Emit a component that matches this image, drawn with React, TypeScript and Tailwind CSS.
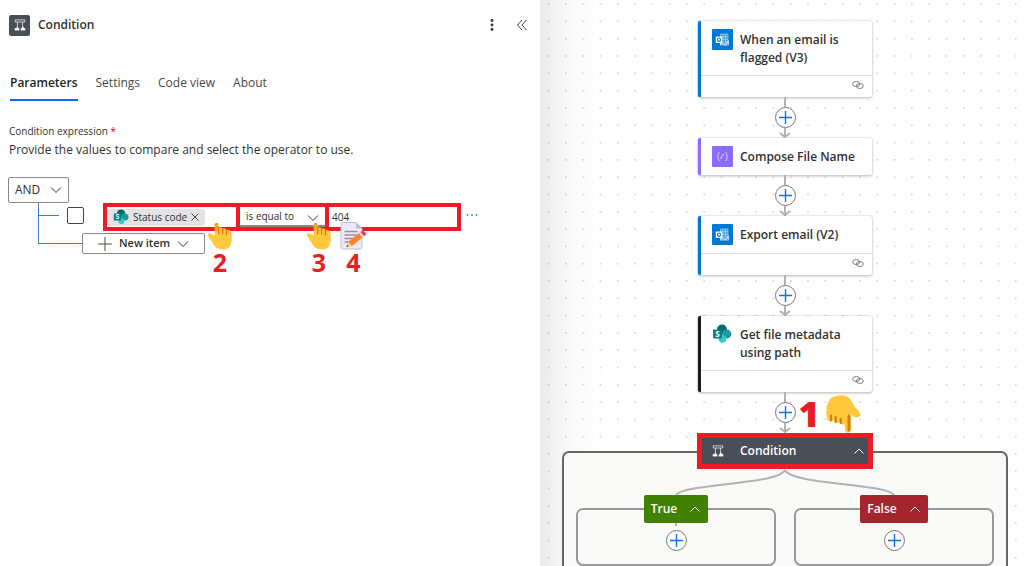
import { useState, type ReactNode } from "react";

function ConditionIcon({ className }: { className?: string }) {
  return (
    <svg viewBox="0 0 14 14" className={className} fill="none" stroke="currentColor">
      <path d="M1.500 1h11v2.500h-11zM4 3.500V9M10 3.500V9" strokeWidth="0.8" />
      <path d="M1 13h5v-2H5.200L4 8.500 2.800 11H1zM8 13h5v-2h-.800L10 8.500 8.800 11H8z" fill="currentColor" strokeWidth="0.4" />
    </svg>
  );
}

function OutlookIcon() {
  return (
    <svg viewBox="0 0 21 21" className="size-[21px] shrink-0">
      <rect width="21" height="21" rx="1" fill="#0078d4" />
      <path d="M8.500 5h7.500v8H8.500zM11 5v8M13.500 5v8M8.500 7.700H16M8.500 10.300H16" fill="#3d98de" stroke="#c4e0f6" strokeWidth="0.6" />
      <path d="M8 12l4.500 2L17 11v5.500H8z" fill="#b5d8f3" />
      <path d="M9 16.500l3.500-2.500M17 16.500l-4.300-3" stroke="#0078d4" strokeWidth="0.5" />
      <rect x="3.800" y="7.500" width="6.400" height="6.400" rx="0.400" fill="#fff" />
      <ellipse cx="7" cy="10.700" rx="1.500" ry="1.700" fill="none" stroke="#0078d4" strokeWidth="1.100" />
    </svg>
  );
}

function ComposeIcon() {
  return (
    <svg viewBox="0 0 21 21" className="size-[21px] shrink-0">
      <rect width="21" height="21" rx="1" fill="#8c6cff" />
      <g fill="none" stroke="#e4dcff" strokeWidth="0.9">
        <path d="M7.500 6.500c-1.500 0-1.200.8-1.200 2s-.3 1.800-1.300 2c1 .2 1.300.8 1.300 2s-.3 2 1.200 2" />
        <path d="M13.500 6.500c1.500 0 1.200.8 1.200 2s.3 1.800 1.300 2c-1 .2-1.300.8-1.300 2s.3 2-1.200 2" />
        <path d="M8.500 12.200l3.300-3.800M8.500 12.200h1.300M10.500 8.600h1.500" />
      </g>
    </svg>
  );
}

function SharePointIcon({ className }: { className?: string }) {
  return (
    <svg viewBox="0 0 20 20" className={className}>
      <circle cx="10" cy="5.500" r="5" fill="#036c70" />
      <circle cx="14.800" cy="10" r="4.500" fill="#1a9ba1" />
      <circle cx="10.500" cy="15" r="3.800" fill="#37c6d0" />
      <rect x="1" y="5.500" width="9" height="9" rx="0.800" fill="#038387" />
      <text x="5.500" y="12.800" textAnchor="middle" fontSize="8" fontWeight="700" fill="#fff">S</text>
    </svg>
  );
}

function LinkIcon() {
  return (
    <svg viewBox="0 0 12 10" className="h-[10px] w-3" fill="none" stroke="#808080">
      <ellipse cx="4.200" cy="4" rx="3.500" ry="2.500" />
      <ellipse cx="7.800" cy="6" rx="3.500" ry="2.500" />
    </svg>
  );
}

function Chevron({ up = false, className }: { up?: boolean; className?: string }) {
  return (
    <svg viewBox="0 0 12 12" className={className} fill="none" stroke="currentColor">
      <path d={up ? "M1.500 8.500L6 4l4.500 4.500" : "M1 3.500l5 5 5-5"} />
    </svg>
  );
}

function PointingHand({ className }: { className?: string }) {
  return (
    <svg viewBox="0 0 26 28" className={className}>
      <path
        d="M7.600 2.500C7.800.7 11.400.4 11.700 2.600V6c1.700-1 3.500-.4 3.900.9 1.700-.8 3.300-.2 3.800 1.100 2-.7 4.600.3 4.900 2.500.9 4.500.8 8.400-.7 12.200-1 3.300-3.500 4.700-8.200 4.700-5 0-7.400-2-8.900-5.400C5.300 19.500 2.800 17.500 1.200 14c-1-2 .3-3 2.200-2.500 1.600.4 3 1.200 4.500 2.500z"
        fill="#ffc83d"
      />
      <path d="M7.600 2.500C7.800.7 10.800.4 11.200 2v4L8 9.500z" fill="#f0a52b" />
      <path d="M11.700 6v5.500M15.600 7v5M19.500 8.500V13" stroke="#d67d00" strokeWidth="1.300" strokeLinecap="round" />
    </svg>
  );
}

function PointingHandDown({ className }: { className?: string }) {
  return (
    <svg viewBox="0 0 36 38" className={className}>
      <path
        d="M2 24C.500 17 1 9 5 4c3-3.500 13-5 18-2 3 2 4.500 5.500 6 8.500 2 3 4.500 4.500 6 7.500 1.500 3-1.500 5.200-5 4-2-.6-3.300-1.500-4.500-2.500L26 34c0 4.500-5.500 5-6 1l-.5-6c-2 1-4.500.5-5.300-1.500-2.700.8-4.700 0-5.200-1.900C6 26.700 2.700 26.500 2 24z"
        fill="#ffc83d"
      />
      <path d="M24 21v14" stroke="#d67d00" strokeWidth="3" strokeLinecap="round" />
      <path d="M15.800 24v4M10.700 22v5M6 20.500v5" stroke="#d67d00" strokeWidth="2.200" strokeLinecap="round" />
    </svg>
  );
}

function NoteIcon({ className }: { className?: string }) {
  return (
    <svg viewBox="0 0 27 28" className={className}>
      <path d="M1 2c0-.8.600-1.500 1.500-1.500H16l6 6V25.500c0 .8-.6 1.500-1.500 1.500h-18C1.600 27 1 26.300 1 25.500z" fill="#eee8f4" stroke="#c5b9cf" />
      <path d="M16 .500l6 6h-6z" fill="#c5b9cf" />
      <path d="M4.500 9.500h13M4.500 13h12M4.500 16.500h9M4.500 20h5" stroke="#998ea4" strokeWidth="1.300" />
      <path d="M7 24.500l1.500-5L19 11l3.500 4.500L12 24z" fill="#ff822d" />
      <path d="M7 24.500l1.500-5 3.500 4.500z" fill="#ffce7c" />
      <path d="M6.500 25l.700-2.200 1.500 1.700z" fill="#433b6b" />
      <path d="M19 11l1.500-1.200 3.500 4.500-1.500 1.200z" fill="#d3d3d3" />
      <path d="M20.500 9.800c1.700-1.500 3.200-1 4.500.4s1.300 2.800-1 4.100z" fill="#f92f60" />
    </svg>
  );
}

function AddButton() {
  return (
    <button aria-label="Insert a new action" className="grid size-[21px] place-items-center rounded-full border border-[#777] bg-white">
      <svg viewBox="0 0 13 13" className="size-[13px]" stroke="#1270ef" strokeWidth="1.400">
        <path d="M6.500 0v13M0 6.500h13" />
      </svg>
    </button>
  );
}

function Connector() {
  return (
    <div className="flex h-[41px] flex-col items-center">
      <div className="h-[10px] w-[2px] bg-[#b1b1b7]" />
      <AddButton />
      <svg viewBox="0 0 12 10" className="h-[10px] w-3" fill="none" stroke="#b1b1b7" strokeWidth="2">
        <path d="M6 0v8.500M1 5l5 4 5-4" />
      </svg>
    </div>
  );
}

type ActionCardProps = { title: string; icon: ReactNode; accent: string; linked?: boolean };

function ActionCard({ title, icon, accent, linked = true }: ActionCardProps) {
  return (
    <article className={`w-[174px] rounded-[2px] border-l-3 bg-white shadow-[0_0_2px_#00000055,0_2px_3px_#00000022] ${accent}`}>
      <div className="flex min-h-[37px] gap-[7px] pt-[10px] pr-2 pb-2 pl-[11px]">
        <div className="-my-[2px] w-[21px] shrink-0">{icon}</div>
        <h3 className="text-[12px] leading-[18px] font-semibold">{title}</h3>
      </div>
      {linked && (
        <div className="flex h-[22px] items-center justify-end border-t border-[#e1e1e1] pr-2 pb-[3px]">
          <LinkIcon />
        </div>
      )}
    </article>
  );
}

function Branch({ label, color, children }: { label: string; color: string; children?: ReactNode }) {
  return (
    <div className="flex flex-col items-center">
      <button className={`z-10 flex h-7 items-center gap-3 rounded-[2px] px-[7px] text-[12px] font-semibold text-white ${color}`}>
        {label}
        <Chevron up className="size-3" />
      </button>
      <div className="-mt-[15px] flex h-[58px] w-full flex-col items-center rounded-[7px] border-2 border-[#999]">
        <div className="flex h-5 items-end pb-1">{children}</div>
        <AddButton />
      </div>
    </div>
  );
}

const tabs = ["Parameters", "Settings", "Code view", "About"];

function ParametersPanel() {
  const [tab, setTab] = useState("Parameters");

  return (
    <section className="w-[540px] shrink-0 bg-white">
      <header className="flex h-[50px] items-center pr-3 pl-[9px]">
        <div className="grid size-[21px] place-items-center rounded-[2px] bg-[#484f58] text-white">
          <ConditionIcon className="size-3" />
        </div>
        <h2 className="ml-2 flex-1 text-[12px] font-semibold">Condition</h2>
        <button aria-label="More" className="grid size-4 place-items-center">
          <svg viewBox="0 0 4 14" className="h-[14px] w-1" fill="#333">
            <circle cx="2" cy="2.500" r="1.400" />
            <circle cx="2" cy="7" r="1.400" />
            <circle cx="2" cy="11.500" r="1.400" />
          </svg>
        </button>
        <button aria-label="Collapse" className="ml-4 grid size-3 place-items-center">
          <svg viewBox="0 0 12 12" className="size-3" fill="none" stroke="#444">
            <path d="M6 1L1.500 6 6 11M10.500 1L6 6l4.500 5" />
          </svg>
        </button>
      </header>

      <nav className="mt-[17px] flex gap-[18px] px-[10px] text-[12px] text-[#484848]">
        {tabs.map((name) => (
          <button
            key={name}
            onClick={() => setTab(name)}
            className={
              name === tab
                ? "h-[34px] border-b-2 border-[#0f6cff] font-semibold text-[#242424]"
                : "h-[34px] border-b-2 border-transparent"
            }
          >
            {name}
          </button>
        ))}
      </nav>

      <div className="mt-[21px] px-[9px]">
        <h4 className="text-[10px] leading-[18px]">
          Condition expression <span className="text-[#c50f1f]">*</span>
        </h4>
        <p className="text-[12px] leading-5">Provide the values to compare and select the operator to use.</p>
      </div>

      <div className="mt-[17px] px-2">
        <button className="flex h-[26px] w-[61px] items-center justify-between rounded-[2px] border border-[#8a8886] px-[6px] text-[12px]">
          AND
          <Chevron className="size-3" />
        </button>

        <div className="ml-[30px] flex h-[41px] border-l border-[#3f7fc4]">
          <div className="mt-3 h-px w-5 bg-[#3f7fc4]" />
          <input type="checkbox" aria-label="Select row" className="mt-1 ml-2 size-[17px] appearance-none rounded-[2px] border border-[#444] bg-white" />
          <div className="relative ml-[19px] h-7 w-[358px] shrink-0">
            <div className="flex h-full divide-x-4 divide-[#ed1c24] border-4 border-[#ed1c24] bg-white text-[10px]">
              <div className="flex w-[133px] items-center">
                <span className="flex h-[17px] items-center gap-1 rounded-[2px] bg-[#e3e3e3] px-[6px]">
                  <SharePointIcon className="size-4" />
                  Status code
                  <button aria-label="Remove Status code">
                    <svg viewBox="0 0 8 8" className="size-2" stroke="#444">
                      <path d="M.5.5l7 7M7.500.5l-7 7" />
                    </svg>
                  </button>
                </span>
              </div>
              <div className="relative w-[89px]">
                <select aria-label="Operator" className="h-full w-full appearance-none border-b-2 border-[#888] pl-[6px]">
                  <option>is equal to</option>
                </select>
                <Chevron className="pointer-events-none absolute top-[5px] right-[6px] size-3" />
              </div>
              <input aria-label="Value" defaultValue="404" className="min-w-0 flex-1 px-[3px] outline-none" />
            </div>

            <div className="pointer-events-none absolute top-[19px] left-[104px] flex flex-col items-center">
              <PointingHand className="h-7 w-[26px]" />
              <span className="text-[25px] leading-6 font-bold text-[#ed1c24]">2</span>
            </div>
            <div className="pointer-events-none absolute top-[19px] left-[203px] flex flex-col items-center">
              <PointingHand className="h-7 w-[26px]" />
              <span className="text-[25px] leading-6 font-bold text-[#ed1c24]">3</span>
            </div>
            <div className="pointer-events-none absolute top-[19px] left-[237px] flex flex-col items-center">
              <NoteIcon className="h-7 w-[27px]" />
              <span className="text-[25px] leading-6 font-bold text-[#ed1c24]">4</span>
            </div>
          </div>
          <button aria-label="Row options" className="mt-1 ml-[5px] h-4 shrink-0">
            <svg viewBox="0 0 12 4" className="h-1 w-3" fill="#2b88d8">
              <circle cx="1.500" cy="2" r="0.900" />
              <circle cx="6" cy="2" r="0.900" />
              <circle cx="10.500" cy="2" r="0.900" />
            </svg>
          </button>
        </div>

        <div className="-mt-[11px] ml-[30px] flex items-center">
          <div className="h-px w-11 bg-[#3f7fc4]" />
          <button className="flex h-[21px] w-[123px] items-center justify-center gap-[7px] rounded-[2px] border border-[#8a8886] bg-white text-[11px] font-semibold">
            <svg viewBox="0 0 14 14" className="size-[14px]" stroke="#5c4a3d">
              <path d="M7 0v14M0 7h14" />
            </svg>
            New item
            <Chevron className="size-3" />
          </button>
        </div>
      </div>
    </section>
  );
}

function FlowCanvas() {
  return (
    <section className="relative min-w-0 flex-1 overflow-hidden border-l border-[#ececec] bg-white">
      <svg className="absolute inset-0 h-full w-full">
        <defs>
          <pattern id="dots" x="-1" y="-4.400" width="17.300" height="17.300" patternUnits="userSpaceOnUse">
            <circle cx="8.600" cy="8.600" r="0.800" fill="#c4c4c4" />
          </pattern>
        </defs>
        <rect width="100%" height="100%" fill="url(#dots)" />
      </svg>
      <div className="absolute inset-y-0 left-0 w-16 bg-linear-to-r from-black/8 via-black/2 to-transparent" />

      <div className="relative flex flex-col items-center pt-[21px] pr-4 pl-[21px]">
        <ActionCard title="When an email is flagged (V3)" icon={<OutlookIcon />} accent="border-[#0078d4]" />
        <Connector />
        <ActionCard title="Compose File Name" icon={<ComposeIcon />} accent="border-[#8c6cff]" linked={false} />
        <Connector />
        <ActionCard title="Export email (V2)" icon={<OutlookIcon />} accent="border-[#0078d4]" />
        <Connector />
        <ActionCard title="Get file metadata using path" icon={<SharePointIcon className="size-[20px]" />} accent="border-[#1b1b1b]" />
        <div className="relative">
          <Connector />
          <span className="absolute top-[10px] left-6 text-[36px] leading-6 font-extrabold text-[#ed1c24]">1</span>
          <PointingHandDown className="absolute top-[3px] left-[50px] z-20 h-[38px] w-9" />
        </div>

        <button className="z-10 flex h-9 w-[176px] items-center border-5 border-[#ed1c24] bg-[#484f58] pr-[3px] pl-[10px] text-[12px] font-semibold text-white">
          <ConditionIcon className="size-3" />
          <span className="ml-4 flex-1 text-left">Condition</span>
          <Chevron up className="size-3" />
        </button>

        <div className="-mt-[18px] h-[140px] w-full rounded-[7px] border-2 border-[#666] bg-[#faf9f8]/90 px-3 pt-4">
          <svg viewBox="0 0 418 26" preserveAspectRatio="none" className="h-[26px] w-full" fill="none" stroke="#b1b1b7" strokeWidth="2">
            <path d="M209 1C202 16 108 14 100 26M209 1c7 15 101 13 109 25" />
          </svg>
          <div className="grid grid-cols-2 gap-[18px]">
            <Branch label="True" color="bg-[#428000]">
              <div className="h-1 w-[2px] bg-[#b1b1b7]" />
            </Branch>
            <Branch label="False" color="bg-[#a4262c]" />
          </div>
        </div>
      </div>
    </section>
  );
}

export default function App() {
  return (
    <main className="flex h-screen overflow-hidden font-['Open_Sans','Noto_Sans',sans-serif] text-[#323130]">
      <ParametersPanel />
      <FlowCanvas />
    </main>
  );
}
